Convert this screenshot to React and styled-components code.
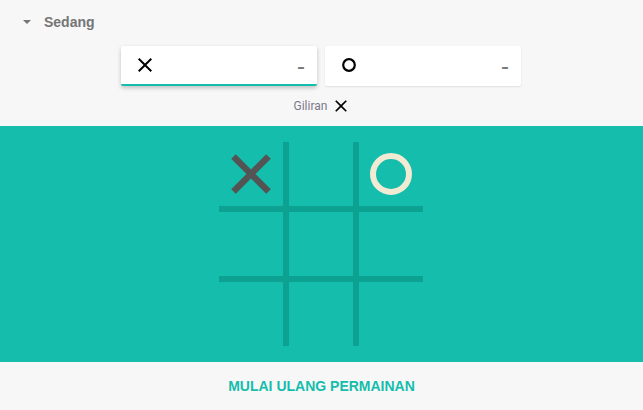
import React, { useState } from "react";
import styled, { createGlobalStyle } from "styled-components";

const GlobalStyle = createGlobalStyle`
  html, body {
    margin: 0;
    padding: 0;
    background: #f7f7f7;
    font-family: Roboto, "Liberation Sans", sans-serif;
  }
`;

const TEAL = "#14bdac";
const LINE = "#0da192";

const CloseIcon = ({ size = 24, color = "#000" }) => (
  <svg width={size} height={size} viewBox="0 0 24 24">
    <path
      fill={color}
      d="M19 6.41L17.59 5 12 10.59 6.41 5 5 6.41 10.59 12 5 17.59 6.41 19 12 13.41 17.59 19 19 17.59 13.41 12z"
    />
  </svg>
);

const CircleIcon = ({ size = 14 }) => (
  <svg width={size} height={size} viewBox="0 0 14 14">
    <circle cx="7" cy="7" r="5.8" fill="none" stroke="#000" strokeWidth="2.2" />
  </svg>
);

const BigX = () => (
  <svg width="40" height="40" viewBox="0 0 40 40">
    <g stroke="#545454" strokeWidth="6.5">
      <line x1="2.5" y1="2.5" x2="37.5" y2="37.5" />
      <line x1="37.5" y1="2.5" x2="2.5" y2="37.5" />
    </g>
  </svg>
);

const BigO = () => (
  <svg width="42" height="42" viewBox="0 0 42 42">
    <circle cx="21" cy="21" r="18" fill="none" stroke="#f2ebd3" strokeWidth="6" />
  </svg>
);

export default function App() {
  const [cells] = useState(["x", null, "o", null, null, null, null, null, null]);

  return (
    <>
      <GlobalStyle />
      <Page>
        <Header>
          <Caret viewBox="0 0 8 4" width="8" height="4">
            <path d="M0 0h8L4 4z" fill="#757575" />
          </Caret>
          <Level>Sedang</Level>
        </Header>

        <Scores>
          <ScoreCard $active>
            <CloseIcon size={24} />
            <Score>-</Score>
          </ScoreCard>
          <ScoreCard>
            <IconBox>
              <CircleIcon />
            </IconBox>
            <Score>-</Score>
          </ScoreCard>
        </Scores>

        <Turn>
          Giliran
          <CloseIcon size={20} />
        </Turn>

        <Field>
          <Board>
            {cells.map((c, i) => (
              <Cell key={i}>
                {c === "x" && <BigX />}
                {c === "o" && <BigO />}
              </Cell>
            ))}
          </Board>
        </Field>

        <Restart>MULAI ULANG PERMAINAN</Restart>
      </Page>
    </>
  );
}

const Page = styled.div`
  width: 643px;
  min-height: 410px;
  display: flex;
  flex-direction: column;
`;

const Header = styled.div`
  height: 44px;
  display: flex;
  align-items: center;
  padding-left: 23px;
  gap: 13px;
`;

const Caret = styled.svg`
  display: block;
`;

const Level = styled.span`
  font-family: "Liberation Sans", Arial, sans-serif;
  font-weight: bold;
  font-size: 14px;
  color: #757575;
`;

const Scores = styled.div`
  display: flex;
  justify-content: center;
  gap: 8px;
  margin-top: 2px;
  padding-right: 1px;
`;

const ScoreCard = styled.div`
  width: 196px;
  height: 40px;
  box-sizing: border-box;
  background: #fff;
  border-radius: 2px;
  display: flex;
  align-items: center;
  justify-content: space-between;
  padding: 0 12px 0 12px;
  border-bottom: 2px solid ${(p) => (p.$active ? TEAL : "transparent")};
  box-shadow: ${(p) =>
    p.$active
      ? "0 2px 4px rgba(0,0,0,0.22)"
      : "0 1px 2px rgba(0,0,0,0.1)"};

  svg {
    display: block;
  }
`;

const IconBox = styled.div`
  width: 24px;
  height: 24px;
  display: flex;
  align-items: center;
  justify-content: center;
`;

const Score = styled.span`
  font-size: 24px;
  line-height: 1;
  color: #777;
  font-family: "Liberation Sans", Arial, sans-serif;
  margin-top: 2px;
`;

const Turn = styled.div`
  height: 40px;
  display: flex;
  align-items: center;
  justify-content: center;
  gap: 2px;
  padding-left: 2px;
  font-size: 12px;
  color: #7a7a8a;

  svg {
    display: block;
    margin-left: 2px;
  }
`;

const Field = styled.div`
  background: ${TEAL};
  padding: 16px 1px 16px 0;
  display: flex;
  justify-content: center;
`;

const Board = styled.div`
  display: grid;
  grid-template-columns: repeat(3, 64px);
  grid-template-rows: repeat(3, 64px);
  gap: 6px;
  background: ${LINE};
`;

const Cell = styled.div`
  background: ${TEAL};
  display: flex;
  align-items: center;
  justify-content: center;

  svg {
    display: block;
  }
`;

const Restart = styled.button`
  height: 48px;
  border: none;
  background: transparent;
  color: ${TEAL};
  font-family: "Liberation Sans", Arial, sans-serif;
  font-weight: bold;
  font-size: 14px;
  cursor: pointer;
`;
